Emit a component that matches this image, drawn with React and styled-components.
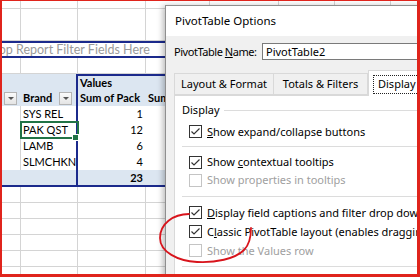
import React from 'react';
import styled, { createGlobalStyle } from 'styled-components';

const GlobalStyle = createGlobalStyle`
  html, body { margin: 0; padding: 0; background: #fff; }
  body { width: 420px; height: 277px; overflow: hidden; }
`;

const NAVY = '#1b2a8c';
const GRID = '#d4d4d4';
const HEAD = '#dce6f1';

const Frame = styled.div`
  position: relative;
  width: 420px;
  height: 277px;
  box-sizing: border-box;
  border-style: solid;
  border-color: #e0241c;
  border-width: 1px 3px 3px 2px;
  overflow: hidden;
  background: #fff;
`;

const Sheet = styled.div`
  display: flex;
  flex-direction: column;
  font-family: Lato, "Liberation Sans", sans-serif;
  font-size: 11px;
  line-height: 14px;
  color: #000;
`;

const Row = styled.div`
  display: flex;
  flex: none;
  height: ${p => p.$h ?? 16}px;
  background: ${p => p.$bg ?? 'transparent'};
  border-bottom: ${p => (p.$navyBottom ? `2px solid ${NAVY}` : 'none')};
  box-sizing: border-box;
`;

const Cell = styled.div`
  position: relative;
  flex: none;
  width: ${p => p.$w}px;
  box-sizing: border-box;
  display: flex;
  align-items: center;
  justify-content: ${p => (p.$right ? 'flex-end' : 'flex-start')};
  padding: 0 ${p => (p.$right ? 3 : 2)}px 0 2px;
  font-weight: ${p => (p.$bold ? 700 : 400)};
  white-space: nowrap;
  border-right: ${p => (p.$navyRight ? `2px solid ${NAVY}` : p.$noV ? 'none' : `1px solid ${GRID}`)};
  border-bottom: ${p => (p.$noH ? 'none' : `1px solid ${GRID}`)};
  border-top: ${p => (p.$navyTop ? `2px solid ${NAVY}` : 'none')};
  outline: ${p => (p.$selected ? '2px solid #217346' : 'none')};
  outline-offset: -1px;
  z-index: ${p => (p.$selected ? 2 : 'auto')};
  &::after {
    content: '';
    display: ${p => (p.$selected ? 'block' : 'none')};
    position: absolute;
    right: -3px;
    bottom: -3px;
    width: 5px;
    height: 5px;
    background: #217346;
    border: 1px solid #fff;
  }
`;

const Band = styled.div`
  flex: none;
  height: 17px;
  box-sizing: border-box;
  border-top: 2px solid ${NAVY};
  border-bottom: 2px solid ${NAVY};
  display: flex;
  align-items: center;
  white-space: nowrap;
  color: #9a9a9a;
  font-size: 12.5px;
`;

const BandText = styled.span`
  margin-left: -17px;
`;

const DropBtn = styled.span`
  margin-left: auto;
  margin-right: 2px;
  width: 13px;
  height: 13px;
  box-sizing: border-box;
  border: 1px solid #b4b4b4;
  background: linear-gradient(#fbfbfb, #e4e4e4);
  display: flex;
  align-items: center;
  justify-content: center;
  &::before {
    content: '';
    width: 0;
    height: 0;
    border-left: 3px solid transparent;
    border-right: 3px solid transparent;
    border-top: 3px solid #555;
  }
`;

const COLS = [19, 57, 68, 64, 69, 56, 56, 60];

function GridRow({ h }) {
  return (
    <Row $h={h}>
      {COLS.map((w, i) => (
        <Cell key={i} $w={w} />
      ))}
    </Row>
  );
}

/* ---------------- dialog ---------------- */

const Dialog = styled.div`
  position: absolute;
  left: 163px;
  top: 4px;
  width: 270px;
  height: 290px;
  box-sizing: border-box;
  border: 1px solid #8f8f8f;
  box-shadow: -2px 1px 6px rgba(0, 0, 0, 0.28);
  background: #f0f0f0;
  display: flex;
  flex-direction: column;
  font-family: "Noto Sans", "Open Sans", sans-serif;
  font-size: 11px;
  line-height: 14px;
  color: #000;
  z-index: 5;
`;

const TitleBar = styled.div`
  height: 30px;
  flex: none;
  background: #fff;
  display: flex;
  align-items: center;
  padding-left: 9px;
  font-size: 11.5px;
`;

const NameRow = styled.div`
  display: flex;
  align-items: center;
  margin-top: 7px;
  padding-left: 8px;
  height: 17px;
  flex: none;
  white-space: nowrap;
`;

const NameLabel = styled.span`
  width: 88px;
  flex: none;
  white-space: nowrap;
  letter-spacing: -0.45px;
`;

const NameInput = styled.div`
  flex: 1;
  height: 17px;
  box-sizing: border-box;
  border: 1px solid #7a7a7a;
  background: #fff;
  display: flex;
  align-items: center;
  padding-left: 3px;
`;

const TabStrip = styled.div`
  display: flex;
  align-items: flex-end;
  margin-top: 13px;
  margin-left: 8px;
  height: 22px;
  flex: none;
  position: relative;
  z-index: 2;
  white-space: nowrap;
`;

const Tab = styled.div`
  flex: none;
  width: ${p => p.$w}px;
  height: ${p => (p.$active ? 26 : 22)}px;
  margin-bottom: ${p => (p.$active ? -1 : 0)}px;
  box-sizing: border-box;
  border: 1px solid #d9d9d9;
  border-bottom: ${p => (p.$active ? 'none' : '1px solid #d9d9d9')};
  border-left: ${p => (p.$first || p.$active ? '1px solid #d9d9d9' : 'none')};
  background: ${p => (p.$active ? '#fff' : '#f0f0f0')};
  display: flex;
  align-items: ${p => (p.$active ? 'flex-start' : 'center')};
  justify-content: ${p => (p.$active ? 'flex-start' : 'center')};
  padding: ${p => (p.$active ? '4px 0 0 4px' : '0')};
`;

const FocusRect = styled.span`
  border: 1px dotted #222;
  padding: 0 4px 2px 4px;
  line-height: 15px;
`;

const Panel = styled.div`
  flex: 1;
  margin-left: 8px;
  background: #fff;
  border: 1px solid #d9d9d9;
  display: flex;
  flex-direction: column;
  padding-left: 7px;
`;

const GroupHead = styled.div`
  display: flex;
  align-items: center;
  height: 14px;
  margin-top: 7px;
  margin-bottom: 5px;
  flex: none;
`;

const GroupLine = styled.span`
  flex: 1;
  height: 1px;
  background: #dcdcdc;
  margin-left: 4px;
`;

const Separator = styled.div`
  flex: none;
  height: 1px;
  background: #dcdcdc;
  margin: ${p => p.$m ?? '5px 0 6px'};
`;

const CheckRow = styled.div`
  display: flex;
  align-items: center;
  gap: 5px;
  height: ${p => p.$h ?? 19}px;
  padding-left: 7px;
  flex: none;
  white-space: nowrap;
  color: ${p => (p.$disabled ? '#a0a0a0' : '#000')};
`;

const Box = styled.span`
  flex: none;
  width: 13px;
  height: 13px;
  box-sizing: border-box;
  border: 1px solid ${p => (p.$disabled ? '#c4c4c4' : '#333')};
  background: #fff;
  display: flex;
`;

function Check({ checked, disabled, children, h }) {
  return (
    <CheckRow $disabled={disabled} $h={h}>
      <Box $disabled={disabled}>
        {checked && (
          <svg width="11" height="11" viewBox="0 0 11 11">
            <path d="M1.5 5.5 L4 8 L9.5 2.5" fill="none" stroke="#333" strokeWidth="1.2" />
          </svg>
        )}
      </Box>
      <span>{children}</span>
    </CheckRow>
  );
}

const Scribble = styled.svg`
  position: absolute;
  left: -2px;
  top: -1px;
  width: 420px;
  height: 277px;
  pointer-events: none;
  z-index: 10;
`;

const DATA = [
  ['SYS REL', 1],
  ['PAK QST', 12],
  ['LAMB', 6],
  ['SLMCHKN', 4],
];

export default function App() {
  return (
    <>
      <GlobalStyle />
      <Frame>
        <Sheet>
          <GridRow h={8} />
          <GridRow h={32} />
          <Band>
            <BandText>Drop Report Filter Fields Here</BandText>
          </Band>
          <GridRow h={16} />
          <Row $h={16} $bg={HEAD}>
            <Cell $w={19} $noV $noH />
            <Cell $w={57} $navyRight $noH />
            <Cell $w={68} $bold $navyTop $noV $noH>Values</Cell>
            <Cell $w={64} $navyTop $noV $noH />
            <Cell $w={200} $navyTop $noV $noH />
          </Row>
          <Row $h={16} $bg={HEAD}>
            <Cell $w={19} $noV $noH><DropBtn /></Cell>
            <Cell $w={57} $bold $navyRight $noH>Brand<DropBtn /></Cell>
            <Cell $w={68} $bold $noV $noH>Sum of Pack</Cell>
            <Cell $w={64} $bold $noV $noH>Sum of Pack</Cell>
          </Row>
          {DATA.map(([brand, n]) => (
            <Row key={brand} $h={16}>
              <Cell $w={19} $noH />
              <Cell $w={57} $navyRight $noH $selected={brand === 'PAK QST'}>{brand}</Cell>
              <Cell $w={68} $right $noV $noH>{n}</Cell>
              <Cell $w={64} $noV $noH />
            </Row>
          ))}
          <Row $h={17} $bg={HEAD} $navyBottom>
            <Cell $w={19} $noV $noH />
            <Cell $w={57} $navyRight $noH />
            <Cell $w={68} $right $bold $noV $noH>23</Cell>
            <Cell $w={64} $noV $noH />
          </Row>
          <GridRow h={16} />
          <GridRow h={16} />
          <GridRow h={16} />
          <GridRow h={16} />
          <GridRow h={16} />
          <GridRow h={16} />
        </Sheet>

        <Dialog>
          <TitleBar>PivotTable Options</TitleBar>
          <NameRow>
            <NameLabel>PivotTable <u>N</u>ame:</NameLabel>
            <NameInput>PivotTable2</NameInput>
          </NameRow>
          <TabStrip>
            <Tab $w={100} $first>Layout &amp; Format</Tab>
            <Tab $w={94}>Totals &amp; Filters</Tab>
            <Tab $w={70} $active>
              <FocusRect>Display</FocusRect>
            </Tab>
          </TabStrip>
          <Panel>
            <GroupHead>
              Display
              <GroupLine />
            </GroupHead>
            <Check checked><u>S</u>how expand/collapse buttons</Check>
            <Separator />
            <Check checked h={18}>Show <u>c</u>ontextual tooltips</Check>
            <Check disabled h={18}>Show properties in tooltips</Check>
            <Separator $m="7px 0 6px" />
            <Check checked><u>D</u>isplay field captions and filter drop downs</Check>
            <Check checked>C<u>l</u>assic PivotTable layout (enables dragging of fields in the grid)</Check>
            <Check disabled>Show the Values row</Check>
            <Separator $m="6px 0 0" />
          </Panel>
        </Dialog>

        <Scribble viewBox="0 0 420 277">
          <path
            d="M189 214 C173 214 160 224 160 238 C160 252 178 261 197 262 C215 263 235 259 244 250 C250 244 251 236 251 228"
            fill="none"
            stroke="#d8141c"
            strokeWidth="1.8"
            strokeLinecap="round"
          />
        </Scribble>
      </Frame>
    </>
  );
}
